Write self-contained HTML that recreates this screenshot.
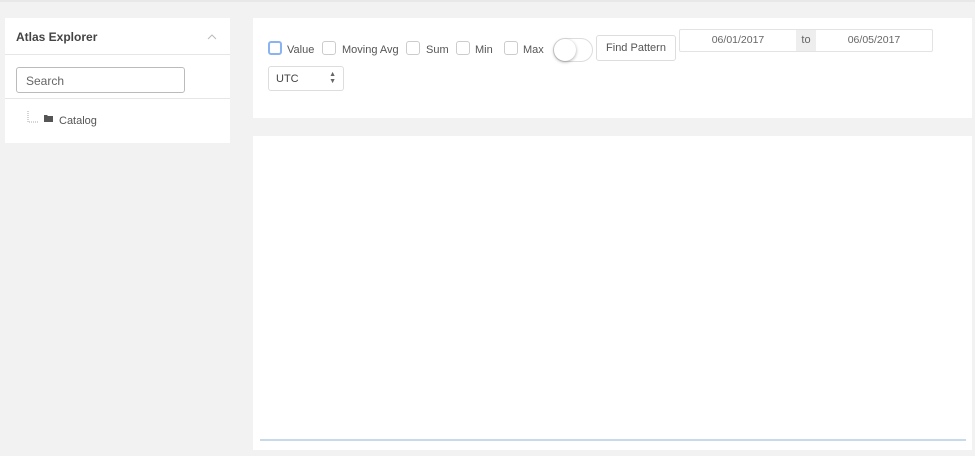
<!DOCTYPE html>
<html><head><style>
*{box-sizing:border-box;margin:0;padding:0}
body{width:975px;height:456px;background:#f2f2f2;font-family:"Liberation Sans",sans-serif;color:#555;position:relative;overflow:hidden;font-size:11px}
.abs{position:absolute}
.topline{left:0;top:0;width:975px;height:2px;background:#e8e8e8}
.left{left:5px;top:18px;width:225px;height:125px;background:#fff}
.cb{width:14px;height:14px;border:1px solid #ccc;border-radius:3px;background:#fff}
.lbl{font-size:11px;color:#555}
</style></head><body>
<div class="abs topline"></div>
<div class="abs left">
  <div class="abs" style="left:11px;top:12px;font-size:12px;font-weight:bold;color:#444">Atlas Explorer</div>
  <svg class="abs" style="left:202px;top:15px" width="10" height="8"><path d="M1 6 L5 2 L9 6" stroke="#bbb" fill="none" stroke-width="1"/></svg>
  <div class="abs" style="left:0;top:36px;width:225px;height:1px;background:#e6e6e6"></div>
  <div class="abs" style="left:11px;top:49px;width:169px;height:26px;border:1px solid #bbb;border-radius:3px;padding:6px 9px;font-size:12px;color:#666">Search</div>
  <div class="abs" style="left:0;top:80px;width:225px;height:1px;background:#e6e6e6"></div>
  <svg class="abs" style="left:20px;top:92px" width="40" height="16"><path d="M3 1 V12 H14" stroke="#aaa" fill="none" stroke-dasharray="1 1"/><path d="M19 5 h3 l1 1 h5 v6 h-9z" fill="#555"/></svg>
  <div class="abs" style="left:54px;top:97px;font-size:11px;color:#555">Catalog</div>
</div>
<div class="abs" style="left:253px;top:18px;width:719px;height:100px;background:#fff">
  <div class="abs cb" style="left:15px;top:23px;border:2px solid #8ab4f0"></div>
  <div class="abs lbl" style="left:34px;top:26px">Value</div>
  <div class="abs cb" style="left:69px;top:23px"></div>
  <div class="abs lbl" style="left:89px;top:26px">Moving Avg</div>
  <div class="abs cb" style="left:153px;top:23px"></div>
  <div class="abs lbl" style="left:173px;top:26px">Sum</div>
  <div class="abs cb" style="left:203px;top:23px"></div>
  <div class="abs lbl" style="left:222px;top:26px">Min</div>
  <div class="abs cb" style="left:251px;top:23px"></div>
  <div class="abs lbl" style="left:270px;top:26px">Max</div>
  <div class="abs" style="left:300px;top:20px;width:40px;height:24px;border:1px solid #ddd;border-radius:12px;background:#fff"><div class="abs" style="left:0;top:0;width:22px;height:22px;border-radius:50%;background:#fff;box-shadow:0 1px 3px rgba(0,0,0,.35)"></div></div>
  <div class="abs" style="left:343px;top:17px;width:80px;height:26px;border:1px solid #ddd;border-radius:3px;font-size:11px;color:#555;text-align:center;line-height:24px">Find Pattern</div>
  <div class="abs" style="left:426px;top:11px;width:254px;height:23px;border:1px solid #e3e3e3;border-radius:2px;font-size:10.5px;color:#666">
    <div class="abs" style="left:0;top:0;width:116px;height:21px;text-align:center;line-height:21px">06/01/2017</div>
    <div class="abs" style="left:116px;top:0;width:20px;height:21px;background:#eee;text-align:center;line-height:21px;font-size:11px">to</div>
    <div class="abs" style="left:136px;top:0;width:116px;height:21px;text-align:center;line-height:21px">06/05/2017</div>
  </div>
  <div class="abs" style="left:15px;top:48px;width:76px;height:25px;border:1px solid #ddd;border-radius:3px;font-size:11px;color:#444;padding:6px 7px">UTC<span class="abs" style="right:7px;top:4px;font-size:7px;line-height:7px;color:#666">▲<br>▼</span></div>
</div>
<div class="abs" style="left:253px;top:136px;width:719px;height:314px;background:#fff">
  <div class="abs" style="left:7px;top:303px;width:706px;height:2px;background:#c8daea"></div>
</div>
</body></html>
